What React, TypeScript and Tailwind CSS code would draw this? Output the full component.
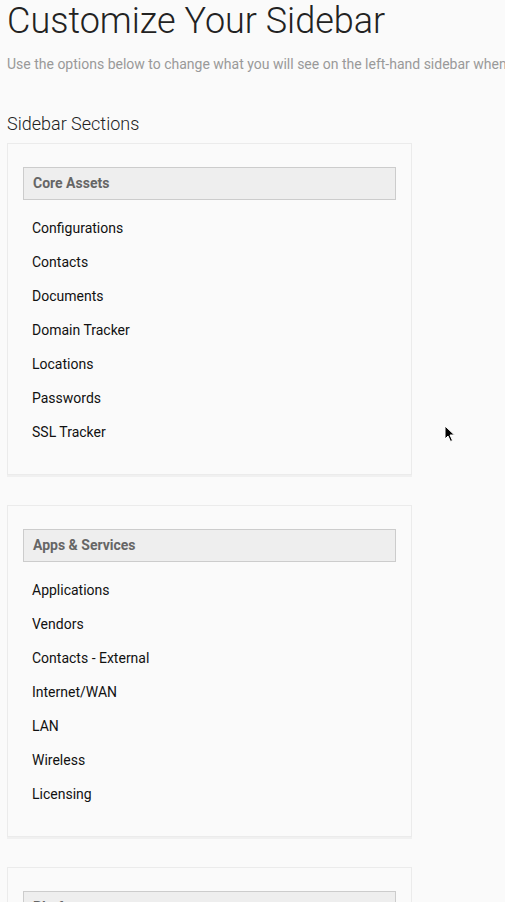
import React from "react";

type Section = {
  title: string;
  items: string[];
};

const SECTIONS: Section[] = [
  {
    title: "Core Assets",
    items: [
      "Configurations",
      "Contacts",
      "Documents",
      "Domain Tracker",
      "Locations",
      "Passwords",
      "SSL Tracker",
    ],
  },
  {
    title: "Apps & Services",
    items: [
      "Applications",
      "Vendors",
      "Contacts - External",
      "Internet/WAN",
      "LAN",
      "Wireless",
      "Licensing",
    ],
  },
  {
    title: "Platforms",
    items: ["Servers", "Workstations", "Printers"],
  },
];

function SectionCard({ section }: { section: Section }) {
  return (
    <div className="w-[405px] border border-[#ebebeb] bg-[#fafafa] px-[15px] pt-[23px] pb-[25px] shadow-[0_2px_0_rgba(0,0,0,0.04)]">
      <div className="border border-[#cccccc] bg-[#eeeeee] px-[9px] py-[7px] text-[14px] leading-[17px] font-bold text-[#666666]">
        {section.title}
      </div>
      <ul className="mt-[11px] pl-[9px]">
        {section.items.map((it) => (
          <li key={it} className="h-[34px] text-[14px] leading-[34px] text-[#111111]">
            {it}
          </li>
        ))}
      </ul>
    </div>
  );
}

function Cursor() {
  return (
    <svg
      className="absolute left-[444px] top-[425px]"
      width="12"
      height="18"
      viewBox="0 0 12 18"
    >
      <path
        d="M1 1 L1 14 L4 11 L6.5 16.5 L8.5 15.5 L6 10 L10.5 10 Z"
        fill="#000"
        stroke="#fff"
        strokeWidth="1"
        strokeLinejoin="round"
      />
    </svg>
  );
}

export default function App() {
  return (
    <div className="relative h-[902px] w-[505px] overflow-hidden bg-[#fafafa] font-['Roboto','Liberation_Sans',sans-serif]">
      <div className="pl-[7px]">
        <h1 className="pt-[1px] text-[36px] leading-[40px] font-light text-[#222222]">
          Customize Your Sidebar
        </h1>
        <p className="mt-[15px] whitespace-nowrap text-[14px] leading-[17px] text-[#999999]">
          Use the options below to change what you will see on the left-hand sidebar when you log in.
        </p>
        <h2 className="mt-[40px] text-[18px] leading-[22px] font-light text-[#222222]">
          Sidebar Sections
        </h2>
        <div className="mt-[8px] flex flex-col gap-[30px]">
          {SECTIONS.map((s) => (
            <SectionCard key={s.title} section={s} />
          ))}
        </div>
      </div>
      <Cursor />
    </div>
  );
}
